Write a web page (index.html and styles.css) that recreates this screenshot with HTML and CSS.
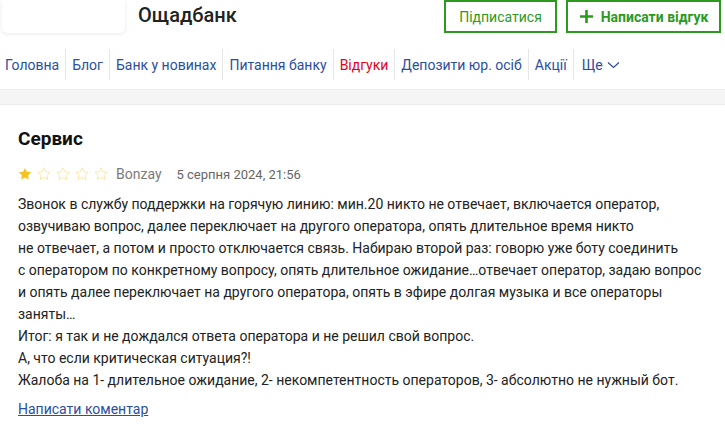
FILE: index.html
```html
<!DOCTYPE html>
<html lang="uk">
<head>
<meta charset="utf-8">
<title>Ощадбанк — відгук</title>
<link rel="stylesheet" href="styles.css">
</head>
<body>
<header class="top">
  <div class="logo-card"></div>
  <h1 class="bank-name">Ощадбанк</h1>
  <div class="actions">
    <a class="btn btn-sub" href="#">Підписатися</a>
    <a class="btn btn-write" href="#">
      <svg class="plus" width="15" height="15" viewBox="0 0 15 15"><path d="M7.5 1v13M1 7.5h13" stroke="#2c9a1f" stroke-width="2.6" fill="none"/></svg>
      Написати відгук
    </a>
  </div>
</header>
<nav class="menu">
  <a class="menu-item" href="#">Головна</a>
  <a class="menu-item" href="#">Блог</a>
  <a class="menu-item" href="#">Банк у новинах</a>
  <a class="menu-item" href="#">Питання банку</a>
  <a class="menu-item active" href="#">Відгуки</a>
  <a class="menu-item" href="#">Депозити юр. осіб</a>
  <a class="menu-item" href="#">Акції</a>
  <a class="menu-item more" href="#">Ще <svg class="chev" width="13" height="8" viewBox="0 0 13 8"><path d="M1 1.5l5.5 5 5.5-5" stroke="#2b4ea0" stroke-width="1.2" fill="none"/></svg></a>
</nav>
<div class="band"></div>
<main class="review">
  <h2 class="review-title">Сервис</h2>
  <div class="meta">
    <div class="stars">
      <svg class="star" viewBox="0 0 24 24"><path class="full" d="M12 1.5l3.2 6.6 7.3 1-5.3 5.1 1.3 7.2L12 18l-6.5 3.4 1.3-7.2L1.5 9.1l7.3-1z"/></svg>
      <svg class="star" viewBox="0 0 24 24"><path class="empty" d="M12 1.5l3.2 6.6 7.3 1-5.3 5.1 1.3 7.2L12 18l-6.5 3.4 1.3-7.2L1.5 9.1l7.3-1z"/></svg>
      <svg class="star" viewBox="0 0 24 24"><path class="empty" d="M12 1.5l3.2 6.6 7.3 1-5.3 5.1 1.3 7.2L12 18l-6.5 3.4 1.3-7.2L1.5 9.1l7.3-1z"/></svg>
      <svg class="star" viewBox="0 0 24 24"><path class="empty" d="M12 1.5l3.2 6.6 7.3 1-5.3 5.1 1.3 7.2L12 18l-6.5 3.4 1.3-7.2L1.5 9.1l7.3-1z"/></svg>
      <svg class="star" viewBox="0 0 24 24"><path class="empty" d="M12 1.5l3.2 6.6 7.3 1-5.3 5.1 1.3 7.2L12 18l-6.5 3.4 1.3-7.2L1.5 9.1l7.3-1z"/></svg>
    </div>
    <span class="author">Bonzay</span>
    <span class="date">5 серпня 2024, 21:56</span>
  </div>
  <p class="text">Звонок в&nbsp;службу поддержки на&nbsp;горячую линию: мин.20 никто не&nbsp;отвечает, включается оператор, озвучиваю вопрос, далее переключает на&nbsp;другого оператора, опять длительное время никто не&nbsp;отвечает, а&nbsp;потом и&nbsp;просто отключается связь. Набираю второй раз: говорю уже боту соединить с&nbsp;оператором по&nbsp;конкретному вопросу, опять длительное ожидание…отвечает оператор, задаю вопрос и&nbsp;опять далее переключает на&nbsp;другого оператора, опять в&nbsp;эфире долгая музыка и&nbsp;все операторы заняты…<br>Итог: я&nbsp;так и&nbsp;не&nbsp;дождался ответа оператора и&nbsp;не&nbsp;решил свой вопрос.<br>А, что если критическая ситуация?!<br>Жалоба на&nbsp;1- длительное ожидание, 2- некомпетентность операторов, 3- абсолютно не&nbsp;нужный бот.</p>
  <a class="comment-link" href="#">Написати коментар</a>
</main>
</body>
</html>
```

FILE: styles.css
```css
* { box-sizing: border-box; }
html, body { margin: 0; padding: 0; background: #fff; }
body {
  font-family: Roboto, "Noto Sans", "Liberation Sans", sans-serif;
  color: #222;
  width: 725px;
  overflow: hidden;
}
a { text-decoration: none; }

.top {
  display: flex;
  align-items: flex-start;
  height: 33px;
  padding-left: 2px;
  padding-right: 4px;
}
.logo-card {
  width: 123px;
  height: 33px;
  background: #fff;
  border-radius: 0 0 5px 5px;
  box-shadow: 0 1px 4px rgba(0, 0, 0, 0.09);
}
.bank-name {
  margin: 3px 0 0 13px;
  font-size: 20px;
  line-height: 24px;
  font-weight: 500;
  color: #222;
}
.actions {
  margin-left: auto;
  display: flex;
  gap: 9px;
}
.btn {
  display: flex;
  align-items: center;
  justify-content: center;
  height: 33px;
  border: 2px solid #2c9a1f;
  color: #2c9a1f;
  font-size: 14px;
}
.btn-sub { width: 113px; }
.btn-write {
  width: 155px;
  font-weight: 700;
  gap: 7px;
}

.menu {
  display: flex;
  margin-top: 16px;
  height: 31px;
}
.menu-item {
  display: flex;
  align-items: center;
  padding: 0 6px;
  font-size: 14px;
  color: #2b4ea0;
  border-left: 1px solid #e6e6e6;
}
.menu-item:first-child { border-left: none; padding-left: 5px; }
.menu-item.active { color: #e4001b; }
.menu-item.more { gap: 4px; padding-left: 8px; }
.chev { margin-top: 1px; }

.band {
  margin-top: 9px;
  height: 16px;
  background: #f5f5f5;
  border-top: 1px solid #ececec;
  border-bottom: 1px solid #ececec;
}

.review {
  padding: 0 18px;
}
.review-title {
  margin: 22px 0 0;
  font-size: 19px;
  line-height: 24px;
  font-weight: 700;
  color: #111;
}
.meta {
  display: flex;
  align-items: center;
  margin-top: 15px;
  height: 16px;
}
.stars { display: flex; gap: 5px; }
.star { width: 14px; height: 14px; }
.star .full { fill: #f7c21a; }
.star .empty { fill: none; stroke: #fbe39a; stroke-width: 1.5; }
.author {
  margin-left: 8px;
  font-size: 14px;
  color: #7a7a7a;
}
.date {
  margin-left: 15px;
  font-size: 13px;
  font-weight: 400;
  color: #666;
}
.text {
  margin: 11px 0 0;
  font-size: 14px;
  line-height: 22px;
  color: #222;
}
.comment-link {
  display: inline-block;
  margin-top: 8px;
  font-size: 14px;
  line-height: 20px;
  color: #2b4ea0;
  text-decoration: underline;
}
```
